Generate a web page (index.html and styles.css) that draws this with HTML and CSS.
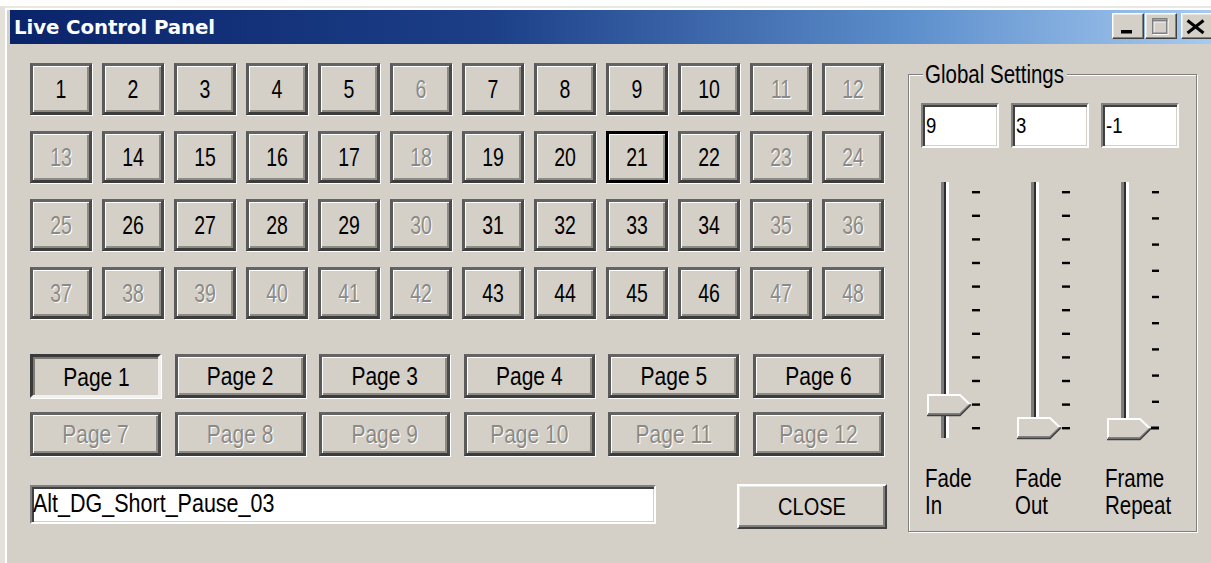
FILE: index.html
```html
<!DOCTYPE html>
<html lang="en">
<head>
<meta charset="utf-8">
<title>Live Control Panel</title>
<link rel="stylesheet" href="styles.css">
</head>
<body>
<div class="window">
  <div class="titlebar">
    <span class="title">Live Control Panel</span>
    <div class="caption">
      <button class="cap cap-min" aria-label="Minimize">
        <svg width="30" height="24" viewBox="0 0 30 24"><rect x="8" y="16" width="11" height="3.5" fill="#000"/></svg>
      </button>
      <button class="cap cap-max" aria-label="Maximize" disabled>
        <svg width="30" height="24" viewBox="0 0 30 24">
          <g fill="none" stroke="#fff" stroke-width="1.5" transform="translate(1 1)">
            <rect x="6.75" y="4.75" width="14" height="14.5"/>
            <line x1="6" y1="6.5" x2="21.5" y2="6.5" stroke-width="2"/>
          </g>
          <g fill="none" stroke="#808080" stroke-width="1.5">
            <rect x="6.75" y="4.75" width="14" height="14.5"/>
            <line x1="6" y1="6.5" x2="21.5" y2="6.5" stroke-width="2"/>
          </g>
        </svg>
      </button>
      <button class="cap cap-close" aria-label="Close">
        <svg width="30" height="24" viewBox="0 0 30 24"><path d="M5.5 6.5 L21.5 19 M21.5 6.5 L5.5 19" stroke="#000" stroke-width="3" fill="none"/></svg>
      </button>
    </div>
  </div>

  <div class="client">
    <div class="main">
      <div class="numgrid">
        <button class="btn num"><span class="t">1</span></button>
        <button class="btn num"><span class="t">2</span></button>
        <button class="btn num"><span class="t">3</span></button>
        <button class="btn num"><span class="t">4</span></button>
        <button class="btn num"><span class="t">5</span></button>
        <button class="btn num off"><span class="t">6</span></button>
        <button class="btn num"><span class="t">7</span></button>
        <button class="btn num"><span class="t">8</span></button>
        <button class="btn num"><span class="t">9</span></button>
        <button class="btn num"><span class="t">10</span></button>
        <button class="btn num off"><span class="t">11</span></button>
        <button class="btn num off"><span class="t">12</span></button>

        <button class="btn num off"><span class="t">13</span></button>
        <button class="btn num"><span class="t">14</span></button>
        <button class="btn num"><span class="t">15</span></button>
        <button class="btn num"><span class="t">16</span></button>
        <button class="btn num"><span class="t">17</span></button>
        <button class="btn num off"><span class="t">18</span></button>
        <button class="btn num"><span class="t">19</span></button>
        <button class="btn num"><span class="t">20</span></button>
        <button class="btn num focus"><span class="t">21</span></button>
        <button class="btn num"><span class="t">22</span></button>
        <button class="btn num off"><span class="t">23</span></button>
        <button class="btn num off"><span class="t">24</span></button>

        <button class="btn num off"><span class="t">25</span></button>
        <button class="btn num"><span class="t">26</span></button>
        <button class="btn num"><span class="t">27</span></button>
        <button class="btn num"><span class="t">28</span></button>
        <button class="btn num"><span class="t">29</span></button>
        <button class="btn num off"><span class="t">30</span></button>
        <button class="btn num"><span class="t">31</span></button>
        <button class="btn num"><span class="t">32</span></button>
        <button class="btn num"><span class="t">33</span></button>
        <button class="btn num"><span class="t">34</span></button>
        <button class="btn num off"><span class="t">35</span></button>
        <button class="btn num off"><span class="t">36</span></button>

        <button class="btn num off"><span class="t">37</span></button>
        <button class="btn num off"><span class="t">38</span></button>
        <button class="btn num off"><span class="t">39</span></button>
        <button class="btn num off"><span class="t">40</span></button>
        <button class="btn num off"><span class="t">41</span></button>
        <button class="btn num off"><span class="t">42</span></button>
        <button class="btn num"><span class="t">43</span></button>
        <button class="btn num"><span class="t">44</span></button>
        <button class="btn num"><span class="t">45</span></button>
        <button class="btn num"><span class="t">46</span></button>
        <button class="btn num off"><span class="t">47</span></button>
        <button class="btn num off"><span class="t">48</span></button>
      </div>

      <div class="pagegrid">
        <button class="btn page pressed"><span class="t">Page 1</span></button>
        <button class="btn page"><span class="t">Page 2</span></button>
        <button class="btn page"><span class="t">Page 3</span></button>
        <button class="btn page"><span class="t">Page 4</span></button>
        <button class="btn page"><span class="t">Page 5</span></button>
        <button class="btn page"><span class="t">Page 6</span></button>
        <button class="btn page off"><span class="t">Page 7</span></button>
        <button class="btn page off"><span class="t">Page 8</span></button>
        <button class="btn page off"><span class="t">Page 9</span></button>
        <button class="btn page off"><span class="t">Page 10</span></button>
        <button class="btn page off"><span class="t">Page 11</span></button>
        <button class="btn page off"><span class="t">Page 12</span></button>
      </div>

      <div class="bottom-row">
        <div class="edit name-edit"><span class="t">Alt_DG_Short_Pause_03</span></div>
        <button class="btn raised close-btn"><span class="t">CLOSE</span></button>
      </div>
    </div>

    <div class="group">
      <div class="group-label"><span class="t">Global Settings</span></div>

      <div class="edits">
        <div class="edit small-edit"><span class="t">9</span></div>
        <div class="edit small-edit"><span class="t">3</span></div>
        <div class="edit small-edit"><span class="t">-1</span></div>
      </div>

      <div class="sliders">
        <!-- Fade In: 11 ticks, thumb on tick 9 -->
        <svg class="slider" width="78" height="262" viewBox="0 0 78 262">
          <rect x="20" y="2" width="3" height="256" fill="#7c7c7c"/>
          <rect x="23" y="2" width="2" height="256" fill="#2e2e2e"/>
          <rect x="25" y="2" width="3" height="256" fill="#fff"/>
          <g fill="#000">
            <rect x="51" y="11" width="8" height="2.4"/><rect x="51" y="34.6" width="8" height="2.4"/>
            <rect x="51" y="58.2" width="8" height="2.4"/><rect x="51" y="81.8" width="8" height="2.4"/>
            <rect x="51" y="105.4" width="8" height="2.4"/><rect x="51" y="129" width="8" height="2.4"/>
            <rect x="51" y="152.6" width="8" height="2.4"/><rect x="51" y="176.2" width="8" height="2.4"/>
            <rect x="51" y="199.8" width="8" height="2.4"/><rect x="51" y="223.4" width="8" height="2.4"/>
            <rect x="51" y="247" width="8" height="2.4"/>
          </g>
          <g transform="translate(6 214)">
            <polygon points="0,0 33,0 44,10.5 33,21 0,21" fill="#d4d0c8"/>
            <polyline points="1,21 1,1 33,1 43,10.5" fill="none" stroke="#fff" stroke-width="2"/>
            <polyline points="43,10.5 33,20 1,20" fill="none" stroke="#808080" stroke-width="2"/>
            <polyline points="44,10.5 33,21.5 0,21.5" fill="none" stroke="#404040" stroke-width="1.5"/>
          </g>
        </svg>
        <!-- Fade Out: 11 ticks, thumb on the last tick -->
        <svg class="slider" width="78" height="262" viewBox="0 0 78 262">
          <rect x="20" y="2" width="3" height="256" fill="#7c7c7c"/>
          <rect x="23" y="2" width="2" height="256" fill="#2e2e2e"/>
          <rect x="25" y="2" width="3" height="256" fill="#fff"/>
          <g fill="#000">
            <rect x="51" y="11" width="8" height="2.4"/><rect x="51" y="34.6" width="8" height="2.4"/>
            <rect x="51" y="58.2" width="8" height="2.4"/><rect x="51" y="81.8" width="8" height="2.4"/>
            <rect x="51" y="105.4" width="8" height="2.4"/><rect x="51" y="129" width="8" height="2.4"/>
            <rect x="51" y="152.6" width="8" height="2.4"/><rect x="51" y="176.2" width="8" height="2.4"/>
            <rect x="51" y="199.8" width="8" height="2.4"/><rect x="51" y="223.4" width="8" height="2.4"/>
            <rect x="51" y="247" width="8" height="2.4"/>
          </g>
          <g transform="translate(6 237)">
            <polygon points="0,0 33,0 44,10.5 33,21 0,21" fill="#d4d0c8"/>
            <polyline points="1,21 1,1 33,1 43,10.5" fill="none" stroke="#fff" stroke-width="2"/>
            <polyline points="43,10.5 33,20 1,20" fill="none" stroke="#808080" stroke-width="2"/>
            <polyline points="44,10.5 33,21.5 0,21.5" fill="none" stroke="#404040" stroke-width="1.5"/>
          </g>
        </svg>
        <!-- Frame Repeat: 10 ticks, thumb on the last tick -->
        <svg class="slider" width="78" height="262" viewBox="0 0 78 262">
          <rect x="20" y="2" width="3" height="244" fill="#7c7c7c"/>
          <rect x="23" y="2" width="2" height="244" fill="#2e2e2e"/>
          <rect x="25" y="2" width="3" height="244" fill="#fff"/>
          <g fill="#000">
            <rect x="51" y="11" width="7" height="2.4"/><rect x="51" y="37.2" width="7" height="2.4"/>
            <rect x="51" y="63.4" width="7" height="2.4"/><rect x="51" y="89.6" width="7" height="2.4"/>
            <rect x="51" y="115.8" width="7" height="2.4"/><rect x="51" y="142" width="7" height="2.4"/>
            <rect x="51" y="168.2" width="7" height="2.4"/><rect x="51" y="194.4" width="7" height="2.4"/>
            <rect x="51" y="220.6" width="7" height="2.4"/><rect x="50" y="246.5" width="8" height="3"/>
          </g>
          <g transform="translate(6 238)">
            <polygon points="0,0 33,0 44,10.5 33,21 0,21" fill="#d4d0c8"/>
            <polyline points="1,21 1,1 33,1 43,10.5" fill="none" stroke="#fff" stroke-width="2"/>
            <polyline points="43,10.5 33,20 1,20" fill="none" stroke="#808080" stroke-width="2"/>
            <polyline points="44,10.5 33,21.5 0,21.5" fill="none" stroke="#404040" stroke-width="1.5"/>
          </g>
        </svg>
      </div>

      <div class="slider-labels">
        <div class="slider-label"><div><span class="t">Fade</span></div><div><span class="t">In</span></div></div>
        <div class="slider-label"><div><span class="t">Fade</span></div><div><span class="t">Out</span></div></div>
        <div class="slider-label"><div><span class="t">Frame</span></div><div><span class="t">Repeat</span></div></div>
      </div>
    </div>
  </div>
</div>
</body>
</html>
```

FILE: styles.css
```css
* {
  box-sizing: border-box;
}

html, body {
  margin: 0;
  padding: 0;
  background: #ffffff;
  overflow: hidden;
}

body {
  width: 1211px;
  height: 563px;
  font-family: "Liberation Sans", Arial, sans-serif;
  font-size: 20.5px;
  color: #000;
}

/* Classic window frame */
.window {
  margin-top: 6px;
  height: 557px;
  background: #d4d0c8;
  border-top: 2px solid #e9e7e2;
  border-left: 5px solid #e4e1db;
  padding: 2px 0 0 5px;
  box-shadow: inset 2px 2px 0 #ffffff;
}

.titlebar {
  height: 34px;
  display: flex;
  align-items: center;
  background: linear-gradient(to right, #0a246a 0%, #1c3f88 40%, #5d8fcc 75%, #a6caf0 100%);
  padding-left: 4px;
}

.title {
  font-family: "DejaVu Sans", Verdana, sans-serif;
  font-weight: bold;
  font-size: 19.8px;
  color: #ffffff;
  letter-spacing: -0.1px;
}

.caption {
  margin-left: auto;
  margin-right: -2px;
  align-self: flex-start;
  margin-top: 3px;
  display: flex;
}

.cap {
  width: 32px;
  height: 26px;
  padding: 0;
  margin: 0;
  background: #d4d0c8;
  border: 1px solid;
  border-color: #ffffff #404040 #404040 #ffffff;
  box-shadow: inset -1px -1px 0 #808080, inset 1px 1px 0 #e8e6e1;
  display: flex;
  align-items: center;
  justify-content: center;
}

.cap svg {
  display: block;
}

.cap-min {
  margin-right: 1px;
}

.cap-max {
  margin-right: 4px;
}

/* Client area */
.client {
  display: flex;
  align-items: flex-start;
  gap: 24px;
  padding: 19px 0 0 20px;
}

.main {
  width: 854px;
}

.t {
  display: inline-block;
  transform: scaleY(1.22);
  white-space: pre;
}

.btn {
  font-family: "Liberation Sans", Arial, sans-serif;
  font-size: 20.5px;
  color: #000;
  background: #d4d0c8;
  margin: 0;
  padding: 0;
  display: flex;
  align-items: center;
  justify-content: center;
}

/* Toggle-style buttons: dark frame with a thin bevel inside */
.num,
.page {
  border: 3px solid;
  border-color: #646464 #4a4a4a #3c3c3c #5a5a5a;
  box-shadow: 1px 1px 0 #ffffff, inset 1px 1px 0 #ffffff, inset -2px -2px 0 #8e8b84;
}

.num.focus {
  border-color: #000 #000 #000 #000;
  border-width: 3px;
}

.page {
  font-size: 21px;
}

.page.pressed {
  border-color: #3a3a3a #f2f1ee #f2f1ee #3a3a3a;
  box-shadow: 1px 1px 0 #ffffff, inset 2px 2px 0 #7d7a74;
  padding: 2px 0 0 2px;
}

.btn.off {
  color: #8c8a86;
  text-shadow: 1px 1px 0 #ffffff;
}

.numgrid {
  display: grid;
  grid-template-columns: repeat(12, 62px);
  grid-auto-rows: 52px;
  column-gap: 10px;
  row-gap: 16px;
}

.num {
  font-size: 19.5px;
}

.num .t {
  transform: scaleY(1.3);
}

.pagegrid {
  margin-top: 35px;
  display: grid;
  grid-template-columns: repeat(6, 1fr);
  grid-auto-rows: 44px;
  column-gap: 13.6px;
  row-gap: 14px;
}

.bottom-row {
  width: 857px;
  margin-top: 28px;
  display: flex;
  justify-content: space-between;
  align-items: flex-start;
}

/* Sunken edit fields */
.edit {
  background: #ffffff;
  border: 2px solid;
  border-color: #808080 #ffffff #ffffff #808080;
  box-shadow: inset 2px 2px 0 #404040, inset -1px -1px 0 #d4d0c8;
  display: flex;
  align-items: center;
}

.name-edit {
  width: 626px;
  height: 39px;
  margin-top: 1px;
  padding-left: 1px;
  font-size: 21.5px;
}

.name-edit .t {
  transform: scaleY(1.18);
}

.raised {
  border: 2px solid;
  border-color: #ffffff #404040 #404040 #ffffff;
  box-shadow: inset -2px -2px 0 #808080, inset 1px 1px 0 #e9e7e2;
}

.close-btn {
  width: 150px;
  height: 45px;
  font-size: 20px;
  padding-top: 1px;
}

/* Global Settings group box */
.group {
  position: relative;
  width: 289px;
  height: 458px;
  margin-top: 11px;
  border: 1px solid #808080;
  box-shadow: inset 1px 1px 0 #ffffff, 1px 1px 0 #ffffff;
  padding: 28px 0 0 12px;
}

.group-label {
  position: absolute;
  left: 14px;
  top: -13px;
  line-height: 24px;
  padding: 0 3px 0 2px;
  background: #d4d0c8;
}

.edits {
  display: flex;
  gap: 12px;
}

.small-edit {
  width: 78px;
  height: 45px;
  font-size: 18.5px;
  padding-left: 3px;
  padding-top: 1px;
}

.small-edit .t {
  transform: scaleY(1.15);
}

.sliders {
  display: flex;
  gap: 12px;
  margin-top: 32px;
}

.slider {
  display: block;
}

.slider-labels {
  display: flex;
  gap: 12px;
  margin-top: 22px;
}

.slider-label {
  width: 78px;
  padding-left: 4px;
  line-height: 27px;
}
```
